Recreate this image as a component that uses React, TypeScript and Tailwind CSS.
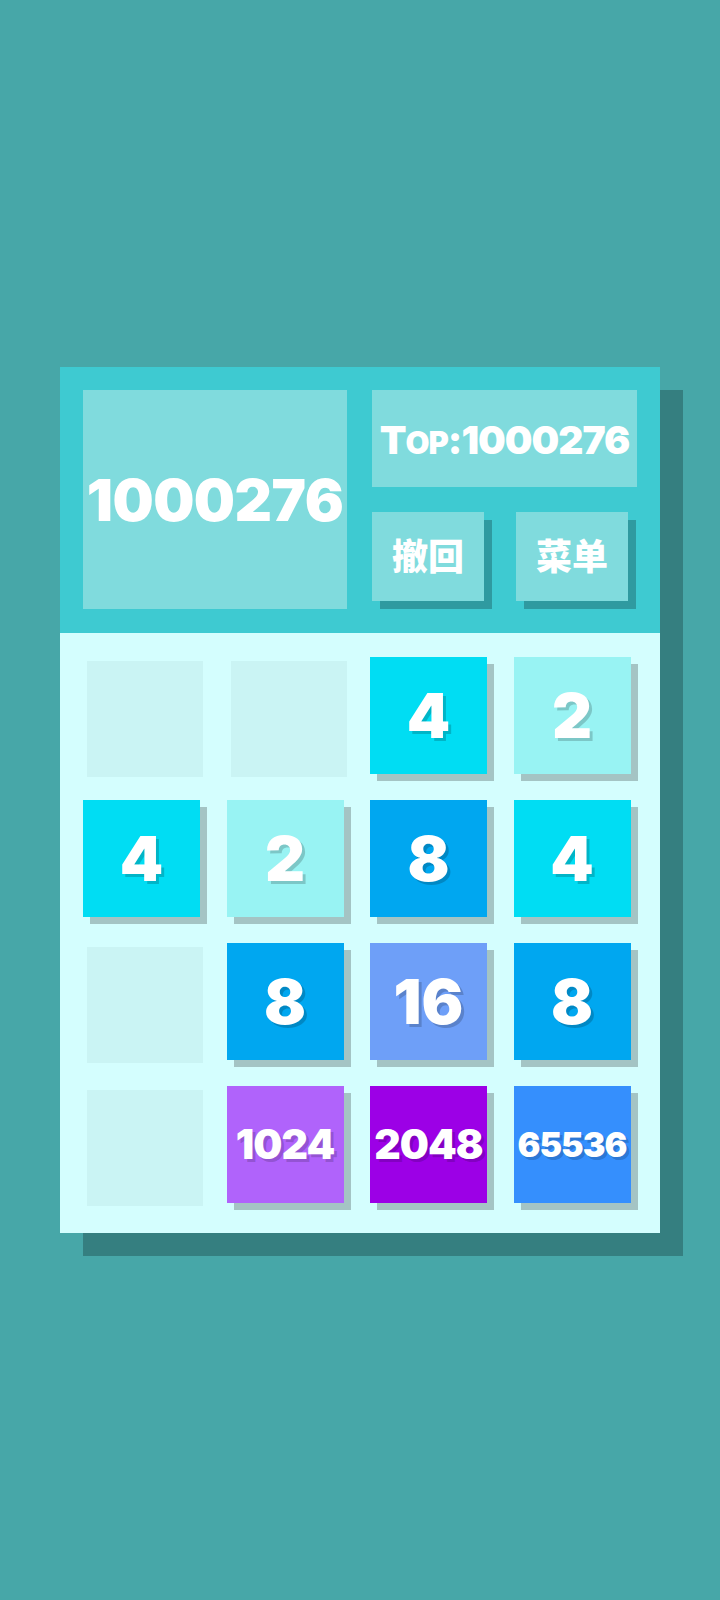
import React from 'react';

type Cell = number | null;

const board: Cell[][] = [
  [null, null, 4, 2],
  [4, 2, 8, 4],
  [null, 8, 16, 8],
  [null, 1024, 2048, 65536],
];

const tileColors: Record<number, string> = {
  2: 'bg-[#98f3f3]',
  4: 'bg-[#00ddf3]',
  8: 'bg-[#00a7f0]',
  16: 'bg-[#6e9ff8]',
  1024: 'bg-[#b063fb]',
  2048: 'bg-[#9c00e6]',
  65536: 'bg-[#358ffd]',
};

function sizeFor(value: number) {
  const len = String(value).length;
  if (len >= 5) return 'text-[34px] tracking-[-1px]';
  if (len === 4) return 'text-[41px] tracking-[-1px]';
  if (len === 3) return 'text-[48px]';
  return 'text-[62px]';
}

function Tile({ value }: { value: Cell }) {
  if (value === null) {
    return <div className="w-[116px] h-[116px] bg-[#caf4f4]" />;
  }
  return (
    <div className="w-[116px] h-[116px]">
      <div
        className={`w-[117px] h-[117px] -translate-x-[4px] -translate-y-[4px] shadow-[7px_7px_0_#a4c4c4] flex items-center justify-center text-white font-black leading-none [text-shadow:3px_3px_0_rgba(0,0,0,0.18)] ${tileColors[value]} ${sizeFor(value)}`}
      >
        {value}
      </div>
    </div>
  );
}

function HeaderButton({ label }: { label: string }) {
  return (
    <button className="w-[112px] h-[89px] bg-[#80dbdd] shadow-[8px_8px_0_#2f9aa0] flex items-center justify-center text-white text-[36px] font-black leading-none">
      {label}
    </button>
  );
}

export default function App() {
  return (
    <div
      className="min-h-[1600px] w-full bg-[#47a7a8] flex items-center justify-center"
      style={{ fontFamily: 'Inter, "Noto Sans CJK SC", sans-serif' }}
    >
      <div className="w-[600px] shadow-[23px_23px_0_#357f80]">
        {/* Header */}
        <div className="h-[266px] bg-[#3ecad1] pt-[23px] pl-[23px] pr-[23px] flex gap-[25px]">
          <div className="w-[264px] h-[219px] bg-[#80dbdd] flex items-center justify-center text-white font-black text-[58px] tracking-[-0.5px] leading-none">
            1000276
          </div>
          <div className="w-[265px] flex flex-col gap-[25px]">
            <div className="h-[97px] bg-[#80dbdd] flex items-baseline justify-center pt-[30px] text-white font-black text-[39px] tracking-[-1px] leading-none">
              <span>T</span>
              <span className="text-[31px]">OP</span>
              <span>:1000276</span>
            </div>
            <div className="flex justify-between pr-[9px]">
              <HeaderButton label="撤回" />
              <HeaderButton label="菜单" />
            </div>
          </div>
        </div>

        {/* Board */}
        <div className="h-[600px] bg-[#d4fefe] pt-[28px] pl-[27px]">
          <div className="grid grid-cols-[repeat(4,116px)] gap-x-[27.5px] gap-y-[27px]">
            {board.map((row, r) =>
              row.map((value, c) => <Tile key={`${r}-${c}`} value={value} />)
            )}
          </div>
        </div>
      </div>
    </div>
  );
}
